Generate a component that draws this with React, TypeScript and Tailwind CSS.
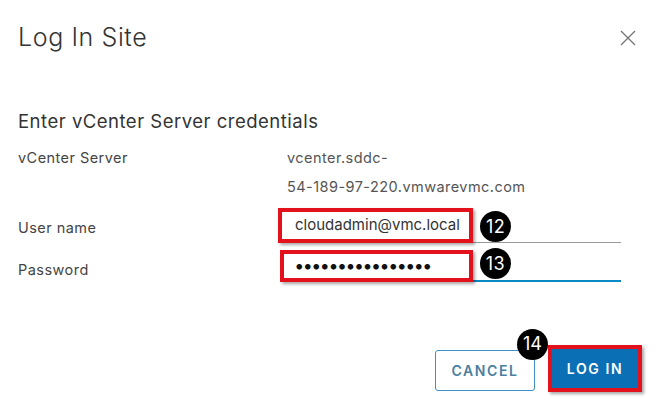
import React from 'react';

const Badge: React.FC<{ n: string; className: string }> = ({ n, className }) => (
  <span
    className={`absolute w-[31px] h-[31px] rounded-full bg-black text-white text-[18px] leading-none flex items-center justify-center ${className}`}
  >
    {n}
  </span>
);

export default function App() {
  return (
    <div className="w-[656px] h-[401px] bg-white relative overflow-hidden font-['Inter',sans-serif] text-[#333]">
      {/* Header */}
      <div className="flex items-start justify-between pl-[18px] pr-[18px] pt-[25px]">
        <h1 className="text-[25px] leading-[24px] font-light tracking-[0.6px]">Log In Site</h1>
        <svg width="18" height="18" viewBox="0 0 18 18" className="mt-[4px] mr-[1px]">
          <path d="M2 2 L16 16 M16 2 L2 16" stroke="#777" strokeWidth="1.4" fill="none" />
        </svg>
      </div>

      {/* Body */}
      <div className="pl-[18px] pr-[35px] pt-[62px]">
        <h2 className="text-[18.5px] leading-[20px] font-normal tracking-[0.5px] text-[#333]">
          Enter vCenter Server credentials
        </h2>

        <div className="grid grid-cols-[269px_1fr] mt-[12px] text-[14.5px] tracking-[0.45px] leading-[29px]">
          <div className="text-[#444]">vCenter Server</div>
          <div className="text-[#555]">
            <div>vcenter.sddc-</div>
            <div>54-189-97-220.vmwarevmc.com</div>
          </div>
        </div>

        {/* User name */}
        <div className="grid grid-cols-[269px_1fr] items-start mt-[7px] text-[14.5px] tracking-[0.45px]">
          <div className="text-[#444] leading-[20px] mt-[10px]">User name</div>
          <div className="relative h-[35px] border-b border-[#9a9a9a]">
            <div className="absolute left-[-9px] top-0 w-[195px] h-[35px] border-[4px] border-[#e3111b] bg-white shadow-[2px_2px_3px_rgba(0,0,0,0.35)] flex items-center pl-[13px] text-[15px] tracking-[0px] text-[#333]">
              cloudadmin@vmc.local
            </div>
            <Badge n="12" className="left-[193px] top-[3px]" />
          </div>
        </div>

        {/* Password */}
        <div className="grid grid-cols-[269px_1fr] items-start mt-[5px] text-[14.5px] tracking-[0.45px]">
          <div className="text-[#444] leading-[20px] mt-[12px]">Password</div>
          <div className="relative h-[34px] border-b-2 border-[#0a8ac5]">
            <div className="absolute left-[-7px] top-[2px] w-[193px] h-[32px] border-[4px] border-[#e3111b] bg-white shadow-[2px_2px_3px_rgba(0,0,0,0.35)] flex items-center pl-[11px] text-[#111]">
              <span className="text-[18px] leading-none font-bold tracking-[0px]">••••••••••••••••</span>
            </div>
            <Badge n="13" className="left-[193px] top-0" />
          </div>
        </div>
      </div>

      {/* Footer */}
      <div className="absolute left-0 right-0 top-[345px] flex justify-end items-center gap-[13px] pr-[14px]">
        <div className="relative">
          <button className="w-[100px] h-[41px] mt-[3px] border border-[#3d8fc4] rounded-[3px] text-[#4a7f9f] text-[14px] font-semibold tracking-[1.6px]">
            CANCEL
          </button>
          <Badge n="14" className="right-[-13px] top-[-18px]" />
        </div>
        <div className="w-[94px] h-[47px] border-[4px] border-[#e3111b] bg-[#0a6fb5] shadow-[2px_2px_3px_rgba(0,0,0,0.35)] flex items-center justify-center text-white text-[14px] font-semibold tracking-[1.6px]">
          LOG IN
        </div>
      </div>
    </div>
  );
}
